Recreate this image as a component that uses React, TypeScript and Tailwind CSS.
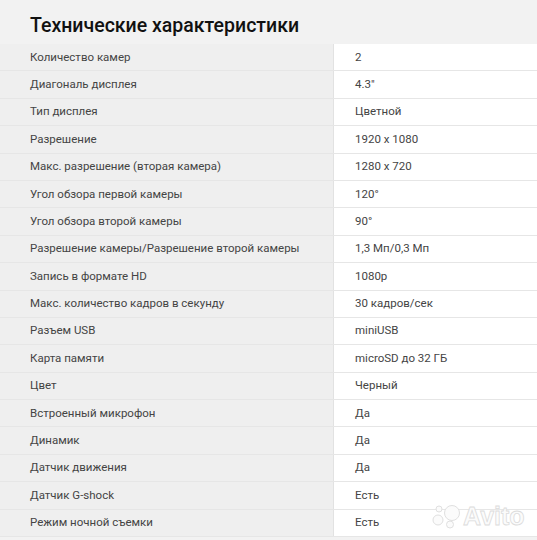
import React from "react";

const rows: [string, string][] = [
  ["Количество камер", "2"],
  ["Диагональ дисплея", "4.3\""],
  ["Тип дисплея", "Цветной"],
  ["Разрешение", "1920 x 1080"],
  ["Макс. разрешение (вторая камера)", "1280 x 720"],
  ["Угол обзора первой камеры", "120°"],
  ["Угол обзора второй камеры", "90°"],
  ["Разрешение камеры/Разрешение второй камеры", "1,3 Мп/0,3 Мп"],
  ["Запись в формате HD", "1080p"],
  ["Макс. количество кадров в секунду", "30 кадров/сек"],
  ["Разъем USB", "miniUSB"],
  ["Карта памяти", "microSD до 32 ГБ"],
  ["Цвет", "Черный"],
  ["Встроенный микрофон", "Да"],
  ["Динамик", "Да"],
  ["Датчик движения", "Да"],
  ["Датчик G-shock", "Есть"],
  ["Режим ночной съемки", "Есть"],
];

export default function App() {
  return (
    <div
      className="relative w-[537px] h-[540px] overflow-hidden bg-[#f2f2f2] text-[#333]"
      style={{ fontFamily: "Roboto, 'Noto Sans', sans-serif" }}
    >
      <div className="h-[44px] pl-[30px] pt-[14px] text-[19.5px] font-medium text-[#111] leading-[24px]">
        Технические характеристики
      </div>
      <div className="flex flex-col">
        {rows.map(([k, v], i) => (
          <div key={i} className="flex h-[27.4px] border-b border-[#e6e6e6]">
            <div className="w-[334px] pl-[30px] flex items-center text-[11.5px] text-[#444] bg-[#efefef] border-r border-[#e2e2e2]">
              {k}
            </div>
            <div className="flex-1 pl-[21px] flex items-center text-[11.5px] text-[#444] bg-white">
              {v}
            </div>
          </div>
        ))}
      </div>
      <div className="absolute left-[430px] top-[503px] flex items-center gap-[1px]">
        <svg width="32" height="26" viewBox="0 0 32 26">
          <circle cx="22" cy="10" r="7.5" fill="#fbfbfb" stroke="#e0e0e0" strokeWidth="1" />
          <circle cx="8" cy="17" r="5" fill="#fbfbfb" stroke="#e0e0e0" strokeWidth="1" />
          <circle cx="20" cy="21.5" r="3.5" fill="#fbfbfb" stroke="#e0e0e0" strokeWidth="1" />
          <circle cx="9" cy="6" r="3" fill="#fbfbfb" stroke="#e0e0e0" strokeWidth="1" />
        </svg>
        <span
          className="text-[25px] font-bold leading-none text-[#fbfbfb]"
          style={{ WebkitTextStroke: "0.8px #dcdcdc", fontFamily: "'Liberation Sans', sans-serif" }}
        >
          Avito
        </span>
      </div>
    </div>
  );
}
